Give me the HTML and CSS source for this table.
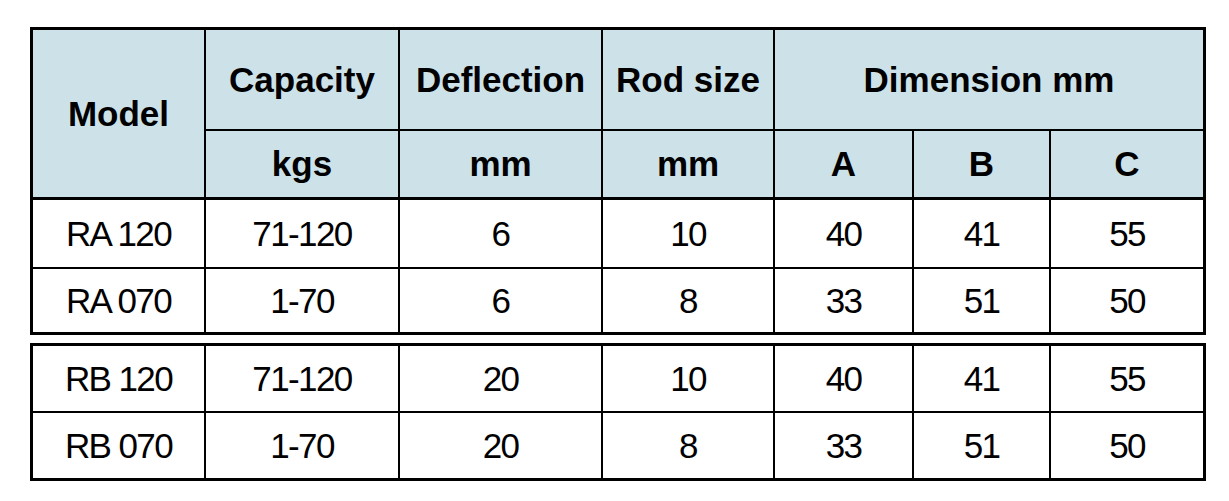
FILE: index.html
```html
<!DOCTYPE html>
<html lang="en">
<head>
  <meta charset="UTF-8">
  <title>Spring Hanger Models</title>
  <link rel="stylesheet" href="styles.css">
</head>
<body>
  <div class="sheet">
    <table class="spec spec-head">
      <colgroup>
        <col class="c-model"><col class="c-cap"><col class="c-defl"><col class="c-rod">
        <col class="c-a"><col class="c-b"><col class="c-c">
      </colgroup>
      <thead>
        <tr class="row-title">
          <th rowspan="2" class="model-head">Model</th>
          <th>Capacity</th>
          <th>Deflection</th>
          <th>Rod size</th>
          <th colspan="3" class="last">Dimension mm</th>
        </tr>
        <tr class="row-unit">
          <th>kgs</th>
          <th>mm</th>
          <th>mm</th>
          <th>A</th>
          <th>B</th>
          <th class="last">C</th>
        </tr>
      </thead>
      <tbody>
        <tr class="row-a1">
          <td>RA 120</td><td>71-120</td><td>6</td><td>10</td><td>40</td><td>41</td><td class="last">55</td>
        </tr>
        <tr class="row-a2 end">
          <td>RA 070</td><td>1-70</td><td>6</td><td>8</td><td>33</td><td>51</td><td class="last">50</td>
        </tr>
      </tbody>
    </table>

    <table class="spec spec-b">
      <colgroup>
        <col class="c-model"><col class="c-cap"><col class="c-defl"><col class="c-rod">
        <col class="c-a"><col class="c-b"><col class="c-c">
      </colgroup>
      <tbody>
        <tr class="row-b1">
          <td>RB 120</td><td>71-120</td><td>20</td><td>10</td><td>40</td><td>41</td><td class="last">55</td>
        </tr>
        <tr class="row-b2 end">
          <td>RB 070</td><td>1-70</td><td>20</td><td>8</td><td>33</td><td>51</td><td class="last">50</td>
        </tr>
      </tbody>
    </table>
  </div>
</body>
</html>
```

FILE: styles.css
```css
body {
  margin: 0;
  background: #ffffff;
  color: #000000;
  font-family: "Liberation Sans", Arial, Helvetica, sans-serif;
}

.sheet {
  padding: 27px 0 0 30px;
}

.spec {
  border-collapse: separate;
  border-spacing: 0;
  border: 3px solid #000000;
  table-layout: fixed;
  width: 1176px;
}

.spec-b {
  margin-top: 8px;
}

.c-model { width: 173px; }
.c-cap { width: 194px; }
.c-defl { width: 203px; }
.c-rod { width: 172px; }
.c-a { width: 139px; }
.c-b { width: 137px; }
.c-c { width: 152px; }

.spec th,
.spec td {
  box-sizing: border-box;
  padding: 0;
  text-align: center;
  vertical-align: middle;
  border-right: 2px solid #000000;
  border-bottom: 2px solid #000000;
  white-space: nowrap;
}

.spec th {
  background: #cce2e8;
  font-size: 35px;
  font-weight: bold;
}

.spec td {
  font-size: 35px;
  letter-spacing: -1.6px;
}

.spec .last {
  border-right: none;
}

.spec .end td {
  border-bottom: none;
}

.row-title th {
  height: 101px;
}

.row-unit th,
.spec .model-head {
  border-bottom-width: 3px;
}

.row-unit th {
  height: 69px;
}

.row-a1 td { height: 69px; }
.row-a2 td { height: 63px; }
.row-b1 td { height: 67px; }
.row-b2 td { height: 65px; }
```
